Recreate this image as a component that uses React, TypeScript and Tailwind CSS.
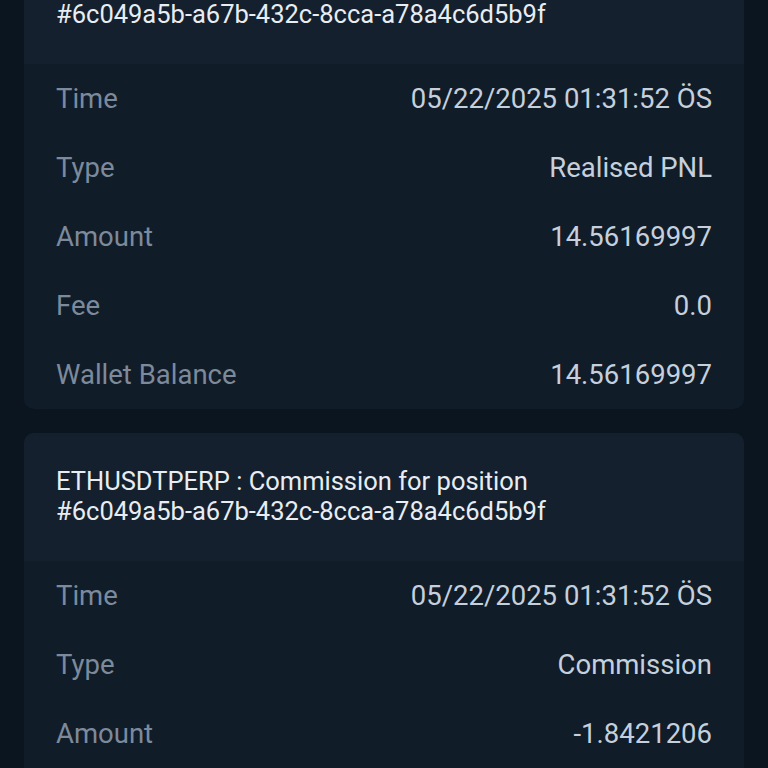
import React from "react";

type Row = { label: string; value: string };
type Entry = { title: string[]; rows: Row[] };

const entries: Entry[] = [
  {
    title: ["ETHUSDTPERP : Realised PNL for position", "#6c049a5b-a67b-432c-8cca-a78a4c6d5b9f"],
    rows: [
      { label: "Time", value: "05/22/2025 01:31:52 ÖS" },
      { label: "Type", value: "Realised PNL" },
      { label: "Amount", value: "14.56169997" },
      { label: "Fee", value: "0.0" },
      { label: "Wallet Balance", value: "14.56169997" },
    ],
  },
  {
    title: ["ETHUSDTPERP : Commission for position", "#6c049a5b-a67b-432c-8cca-a78a4c6d5b9f"],
    rows: [
      { label: "Time", value: "05/22/2025 01:31:52 ÖS" },
      { label: "Type", value: "Commission" },
      { label: "Amount", value: "-1.8421206" },
      { label: "Fee", value: "0.0" },
      { label: "Wallet Balance", value: "12.71957937" },
    ],
  },
];

function Card({ entry }: { entry: Entry }) {
  return (
    <div className="rounded-[10px] overflow-hidden bg-[#111c29]">
      <div className="bg-[#15202e] px-[32px] pt-[33px] pb-[35px] text-[25.5px] leading-[30px] text-[#e8edf2]">
        {entry.title.map((t, i) => (
          <div key={i} className="whitespace-nowrap">{t}</div>
        ))}
      </div>
      <div>
        {entry.rows.map((r, i) => (
          <div key={i} className="flex h-[69px] items-center justify-between px-[32px] text-[27.5px]">
            <span className="text-[#7c8a9c]">{r.label}</span>
            <span className="text-[#c5d0dc]">{r.value}</span>
          </div>
        ))}
      </div>
    </div>
  );
}

export default function App() {
  return (
    <div
      className="h-[768px] w-[768px] overflow-hidden bg-[#0b1520]"
      style={{ fontFamily: "Roboto, 'Noto Sans', sans-serif" }}
    >
      <div className="-mt-[64px] flex flex-col gap-[24px] px-[24px]">
        {entries.map((e, i) => (
          <Card key={i} entry={e} />
        ))}
      </div>
    </div>
  );
}
